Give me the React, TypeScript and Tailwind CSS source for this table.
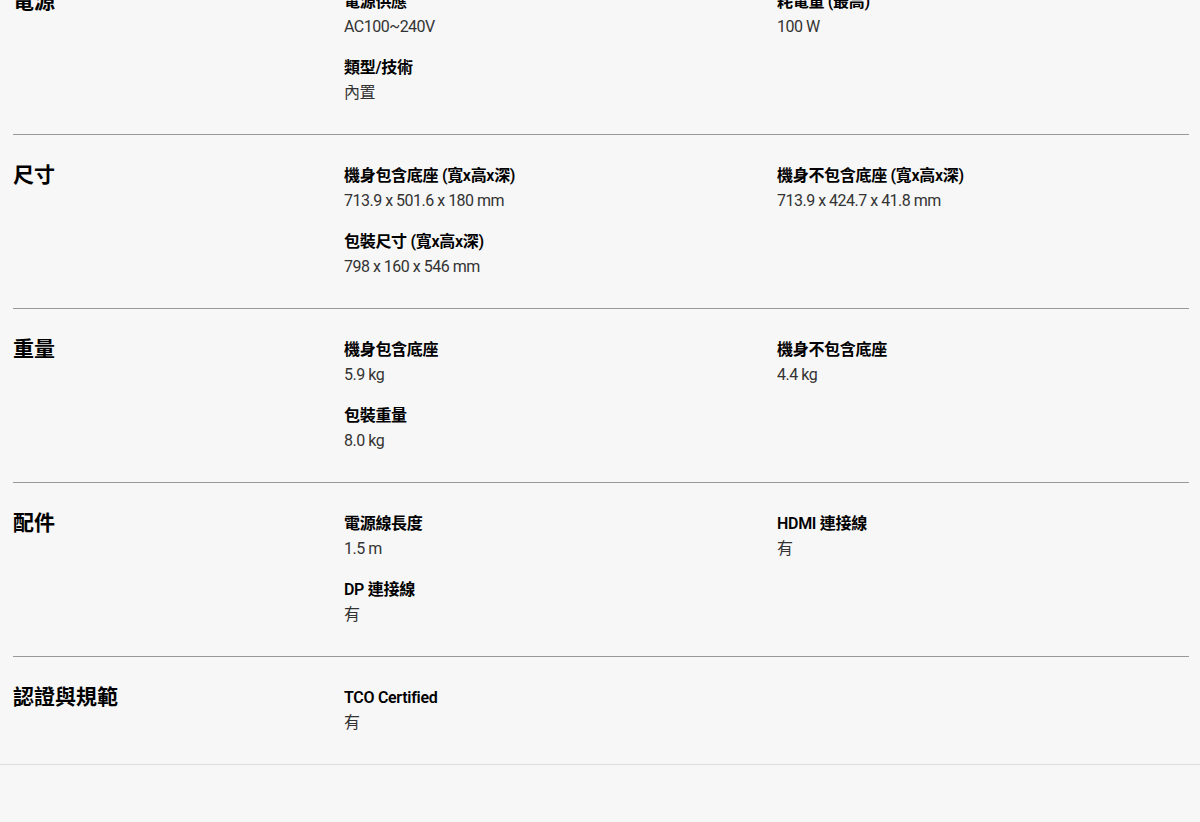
import React from 'react';

interface Spec {
  label: string;
  value: string;
}

interface SpecSection {
  title: string;
  items: Spec[];
}

const sections: SpecSection[] = [
  {
    title: '電源',
    items: [
      { label: '電源供應', value: 'AC100~240V' },
      { label: '耗電量 (最高)', value: '100 W' },
      { label: '類型/技術', value: '內置' },
    ],
  },
  {
    title: '尺寸',
    items: [
      { label: '機身包含底座 (寬x高x深)', value: '713.9 x 501.6 x 180 mm' },
      { label: '機身不包含底座 (寬x高x深)', value: '713.9 x 424.7 x 41.8 mm' },
      { label: '包裝尺寸 (寬x高x深)', value: '798 x 160 x 546 mm' },
    ],
  },
  {
    title: '重量',
    items: [
      { label: '機身包含底座', value: '5.9 kg' },
      { label: '機身不包含底座', value: '4.4 kg' },
      { label: '包裝重量', value: '8.0 kg' },
    ],
  },
  {
    title: '配件',
    items: [
      { label: '電源線長度', value: '1.5 m' },
      { label: 'HDMI 連接線', value: '有' },
      { label: 'DP 連接線', value: '有' },
    ],
  },
  {
    title: '認證與規範',
    items: [{ label: 'TCO Certified', value: '有' }],
  },
];

export default function App() {
  return (
    <div
      className="min-h-[822px] bg-[#f7f7f7] overflow-hidden"
      style={{ fontFamily: 'Roboto, "Noto Sans CJK TC", sans-serif' }}
    >
      <div className="-mt-[39px] border-b border-[#dddddd]">
        <div className="px-[13px] w-[1202px]">
          {sections.map((section, i) => (
            <div
              key={section.title}
              className={`flex pt-[28px] ${
                i < sections.length - 1 ? 'pb-[29px] border-b border-[#999999]' : 'pb-[29px]'
              }`}
            >
              <h3 className="w-[331px] shrink-0 text-[21px] leading-[25px] font-bold text-black">
                {section.title}
              </h3>
              <div className="grid grid-cols-[433px_433px] gap-y-[16px]">
                {section.items.map((item) => (
                  <div key={item.label}>
                    <div className="text-[16px] leading-[25px] font-semibold tracking-[-0.3px] text-black">
                      {item.label}
                    </div>
                    <div className="mt-px text-[16px] leading-[24px] tracking-[-0.5px] text-[#333333]">
                      {item.value}
                    </div>
                  </div>
                ))}
              </div>
            </div>
          ))}
        </div>
      </div>
    </div>
  );
}
